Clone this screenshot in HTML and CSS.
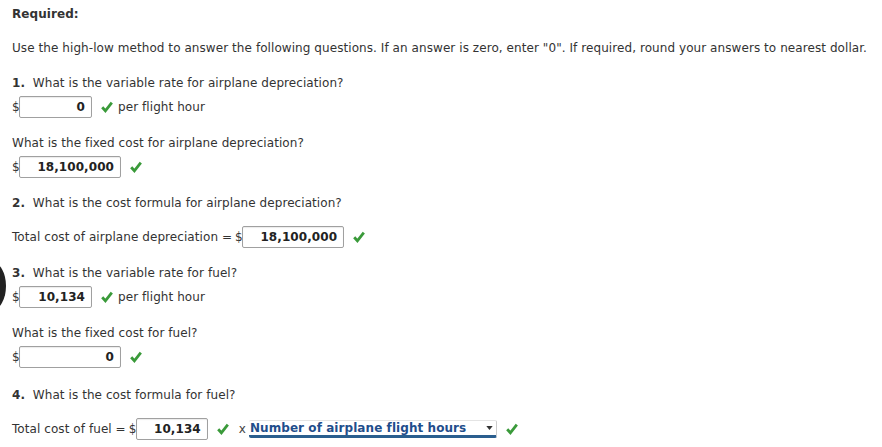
FILE: index.html
```html
<!DOCTYPE html>
<html>
<head>
<meta charset="utf-8">
<link rel="stylesheet" href="styles.css">
</head>
<body>
<div class="edge-dot"></div>
<div class="page">
  <p class="line req">Required:</p>
  <p class="line intro">Use the high-low method to answer the following questions. If an answer is zero, enter "0". If required, round your answers to nearest dollar.</p>

  <p class="line q"><b>1.</b>&nbsp; What is the variable rate for airplane depreciation?</p>
  <div class="row">
    <span class="cur">$</span><span class="box w73">0</span>
    <svg class="chk" viewBox="0 0 12 12"><path d="M1.2 6.2 L4.4 9.8 L10.8 1.6" /></svg>
    <span class="unit">per flight hour</span>
  </div>

  <p class="line q">What is the fixed cost for airplane depreciation?</p>
  <div class="row">
    <span class="cur">$</span><span class="box w102">18,100,000</span>
    <svg class="chk" viewBox="0 0 12 12"><path d="M1.2 6.2 L4.4 9.8 L10.8 1.6" /></svg>
  </div>

  <p class="line q q2"><b>2.</b>&nbsp; What is the cost formula for airplane depreciation?</p>
  <div class="row">
    <span class="lbl">Total cost of airplane depreciation =</span><span class="cur">$</span><span class="box w102">18,100,000</span>
    <svg class="chk" viewBox="0 0 12 12"><path d="M1.2 6.2 L4.4 9.8 L10.8 1.6" /></svg>
  </div>

  <p class="line q"><b>3.</b>&nbsp; What is the variable rate for fuel?</p>
  <div class="row">
    <span class="cur">$</span><span class="box w73">10,134</span>
    <svg class="chk" viewBox="0 0 12 12"><path d="M1.2 6.2 L4.4 9.8 L10.8 1.6" /></svg>
    <span class="unit">per flight hour</span>
  </div>

  <p class="line q">What is the fixed cost for fuel?</p>
  <div class="row last-before">
    <span class="cur">$</span><span class="box w102">0</span>
    <svg class="chk" viewBox="0 0 12 12"><path d="M1.2 6.2 L4.4 9.8 L10.8 1.6" /></svg>
  </div>

  <p class="line q q2"><b>4.</b>&nbsp; What is the cost formula for fuel?</p>
  <div class="row">
    <span class="lbl">Total cost of fuel =</span><span class="cur">$</span><span class="box w74">10,134</span>
    <svg class="chk" viewBox="0 0 12 12"><path d="M1.2 6.2 L4.4 9.8 L10.8 1.6" /></svg>
    <span class="times">x</span>
    <span class="sel">Number of airplane flight hours<svg class="tri" viewBox="0 0 8 5"><path d="M0 0 H8 L4 5 Z"/></svg></span>
    <svg class="chk" viewBox="0 0 12 12"><path d="M1.2 6.2 L4.4 9.8 L10.8 1.6" /></svg>
  </div>
</div>
</body>
</html>
```
FILE: styles.css
```css
html, body {
  margin: 0;
  padding: 0;
  background: #fff;
}
body {
  font-family: "DejaVu Sans", Verdana, sans-serif;
  font-size: 12px;
  letter-spacing: 0.07px;
  color: #333;
}
.page {
  padding: 5px 12px 0 12px;
}
.line {
  margin: 0;
  line-height: 18px;
  white-space: nowrap;
}
.req {
  font-weight: bold;
  margin-bottom: 16px;
}
.intro {
  margin-bottom: 17px;
}
.q {
  margin-bottom: 3px;
}
.q b {
  font-weight: bold;
}
.q2 {
  margin-bottom: 13px;
}
.row {
  display: flex;
  align-items: center;
  height: 24px;
  margin-bottom: 15px;
  white-space: nowrap;
}
.last-before {
  margin-bottom: 17px;
}
.cur {
  width: 7px;
}
.lbl {
  margin-right: 3px;
}
.box {
  box-sizing: border-box;
  height: 22px;
  border: 1px solid #a0a0a0;
  border-radius: 2px;
  box-shadow: inset 0 1px 1px rgba(0,0,0,0.08);
  font-weight: bold;
  font-size: 12px;
  color: #222;
  text-align: right;
  padding: 0 6px;
  line-height: 20px;
}
.w73 { width: 73px; }
.w74 { width: 72px; }
.w102 { width: 102px; }
.chk {
  width: 12px;
  height: 12px;
  margin-left: 9px;
  flex: none;
}
.chk path {
  fill: none;
  stroke: #3a9a3a;
  stroke-width: 2.8;
}
.unit {
  margin-left: 5px;
}
.times {
  margin-left: 10px;
  margin-right: 3px;
  color: #444;
}
.sel {
  position: relative;
  box-sizing: border-box;
  width: 248px;
  height: 18px;
  font-weight: bold;
  font-size: 12px;
  color: #1f4e8c;
  border-bottom: 3px solid #2a5e8e;
  border-right: 1px solid #ccc;
  border-top: 1px solid #e4e4e4;
  border-radius: 2px;
  line-height: 14px;
  padding-left: 1px;
}
.tri {
  position: absolute;
  right: 3px;
  top: 5px;
  width: 7px;
  height: 4px;
}
.tri path {
  fill: #333;
}
.edge-dot {
  position: absolute;
  left: -22px;
  top: 262px;
  width: 28px;
  height: 48px;
  border-radius: 50%;
  background: #222;
}
```
